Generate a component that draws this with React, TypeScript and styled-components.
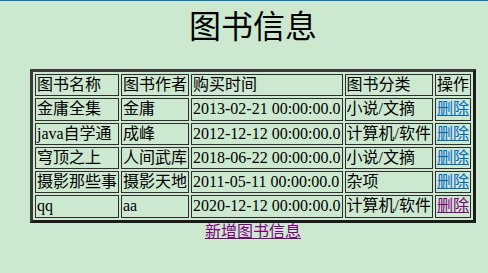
import * as React from 'react';
import styled, { createGlobalStyle } from 'styled-components';

const GlobalStyle = createGlobalStyle`
  html, body {
    margin: 0;
    background: #cce8cf;
  }
  body {
    border-top: 1px solid #0078d7;
    padding-left: 18px;
    font-family: 'Liberation Serif', 'Noto Sans CJK SC', serif;
    font-size: 16px;
    color: #000;
  }
`;

const Page = styled.div`
  display: flex;
  flex-direction: column;
  align-items: center;
`;

const Title = styled.h1`
  margin: 4px 0 20px;
  font-size: 32px;
  font-weight: normal;
  line-height: 44px;
`;

const BookTable = styled.table`
  border-collapse: separate;
  border-spacing: 2px;
  border-width: 3px;
  border-style: solid;
  border-color: #3a3a3a #1c1c1c #1c1c1c #3a3a3a;
`;

const Cell = styled.td`
  padding: 1px;
  border: 1px solid #2e2e2e;
  line-height: 18.3px;
  white-space: nowrap;
  text-align: left;
`;

const ActionLink = styled.a<{ $visited?: boolean }>`
  color: ${p => (p.$visited ? '#800080' : '#0066cc')};
  text-decoration: underline;
  cursor: pointer;
`;

const AddLink = styled.a`
  color: #800080;
  text-decoration: underline;
  line-height: 18px;
  cursor: pointer;
`;

interface Book {
  name: string;
  author: string;
  bought: string;
  category: string;
  visited?: boolean;
}

const books: Book[] = [
  { name: '金庸全集', author: '金庸', bought: '2013-02-21 00:00:00.0', category: '小说/文摘' },
  { name: 'java自学通', author: '成峰', bought: '2012-12-12 00:00:00.0', category: '计算机/软件' },
  { name: '穹顶之上', author: '人间武库', bought: '2018-06-22 00:00:00.0', category: '小说/文摘' },
  { name: '摄影那些事', author: '摄影天地', bought: '2011-05-11 00:00:00.0', category: '杂项' },
  { name: 'qq', author: 'aa', bought: '2020-12-12 00:00:00.0', category: '计算机/软件', visited: true },
];

const headers = ['图书名称', '图书作者', '购买时间', '图书分类', '操作'];

export default function App() {
  return (
    <>
      <GlobalStyle />
      <Page>
        <Title>图书信息</Title>
        <BookTable>
          <tbody>
            <tr>
              {headers.map(h => (
                <Cell key={h}>{h}</Cell>
              ))}
            </tr>
            {books.map(book => (
              <tr key={book.name}>
                <Cell>{book.name}</Cell>
                <Cell>{book.author}</Cell>
                <Cell>{book.bought}</Cell>
                <Cell>{book.category}</Cell>
                <Cell>
                  <ActionLink $visited={book.visited}>删除</ActionLink>
                </Cell>
              </tr>
            ))}
          </tbody>
        </BookTable>
        <AddLink>新增图书信息</AddLink>
      </Page>
    </>
  );
}
